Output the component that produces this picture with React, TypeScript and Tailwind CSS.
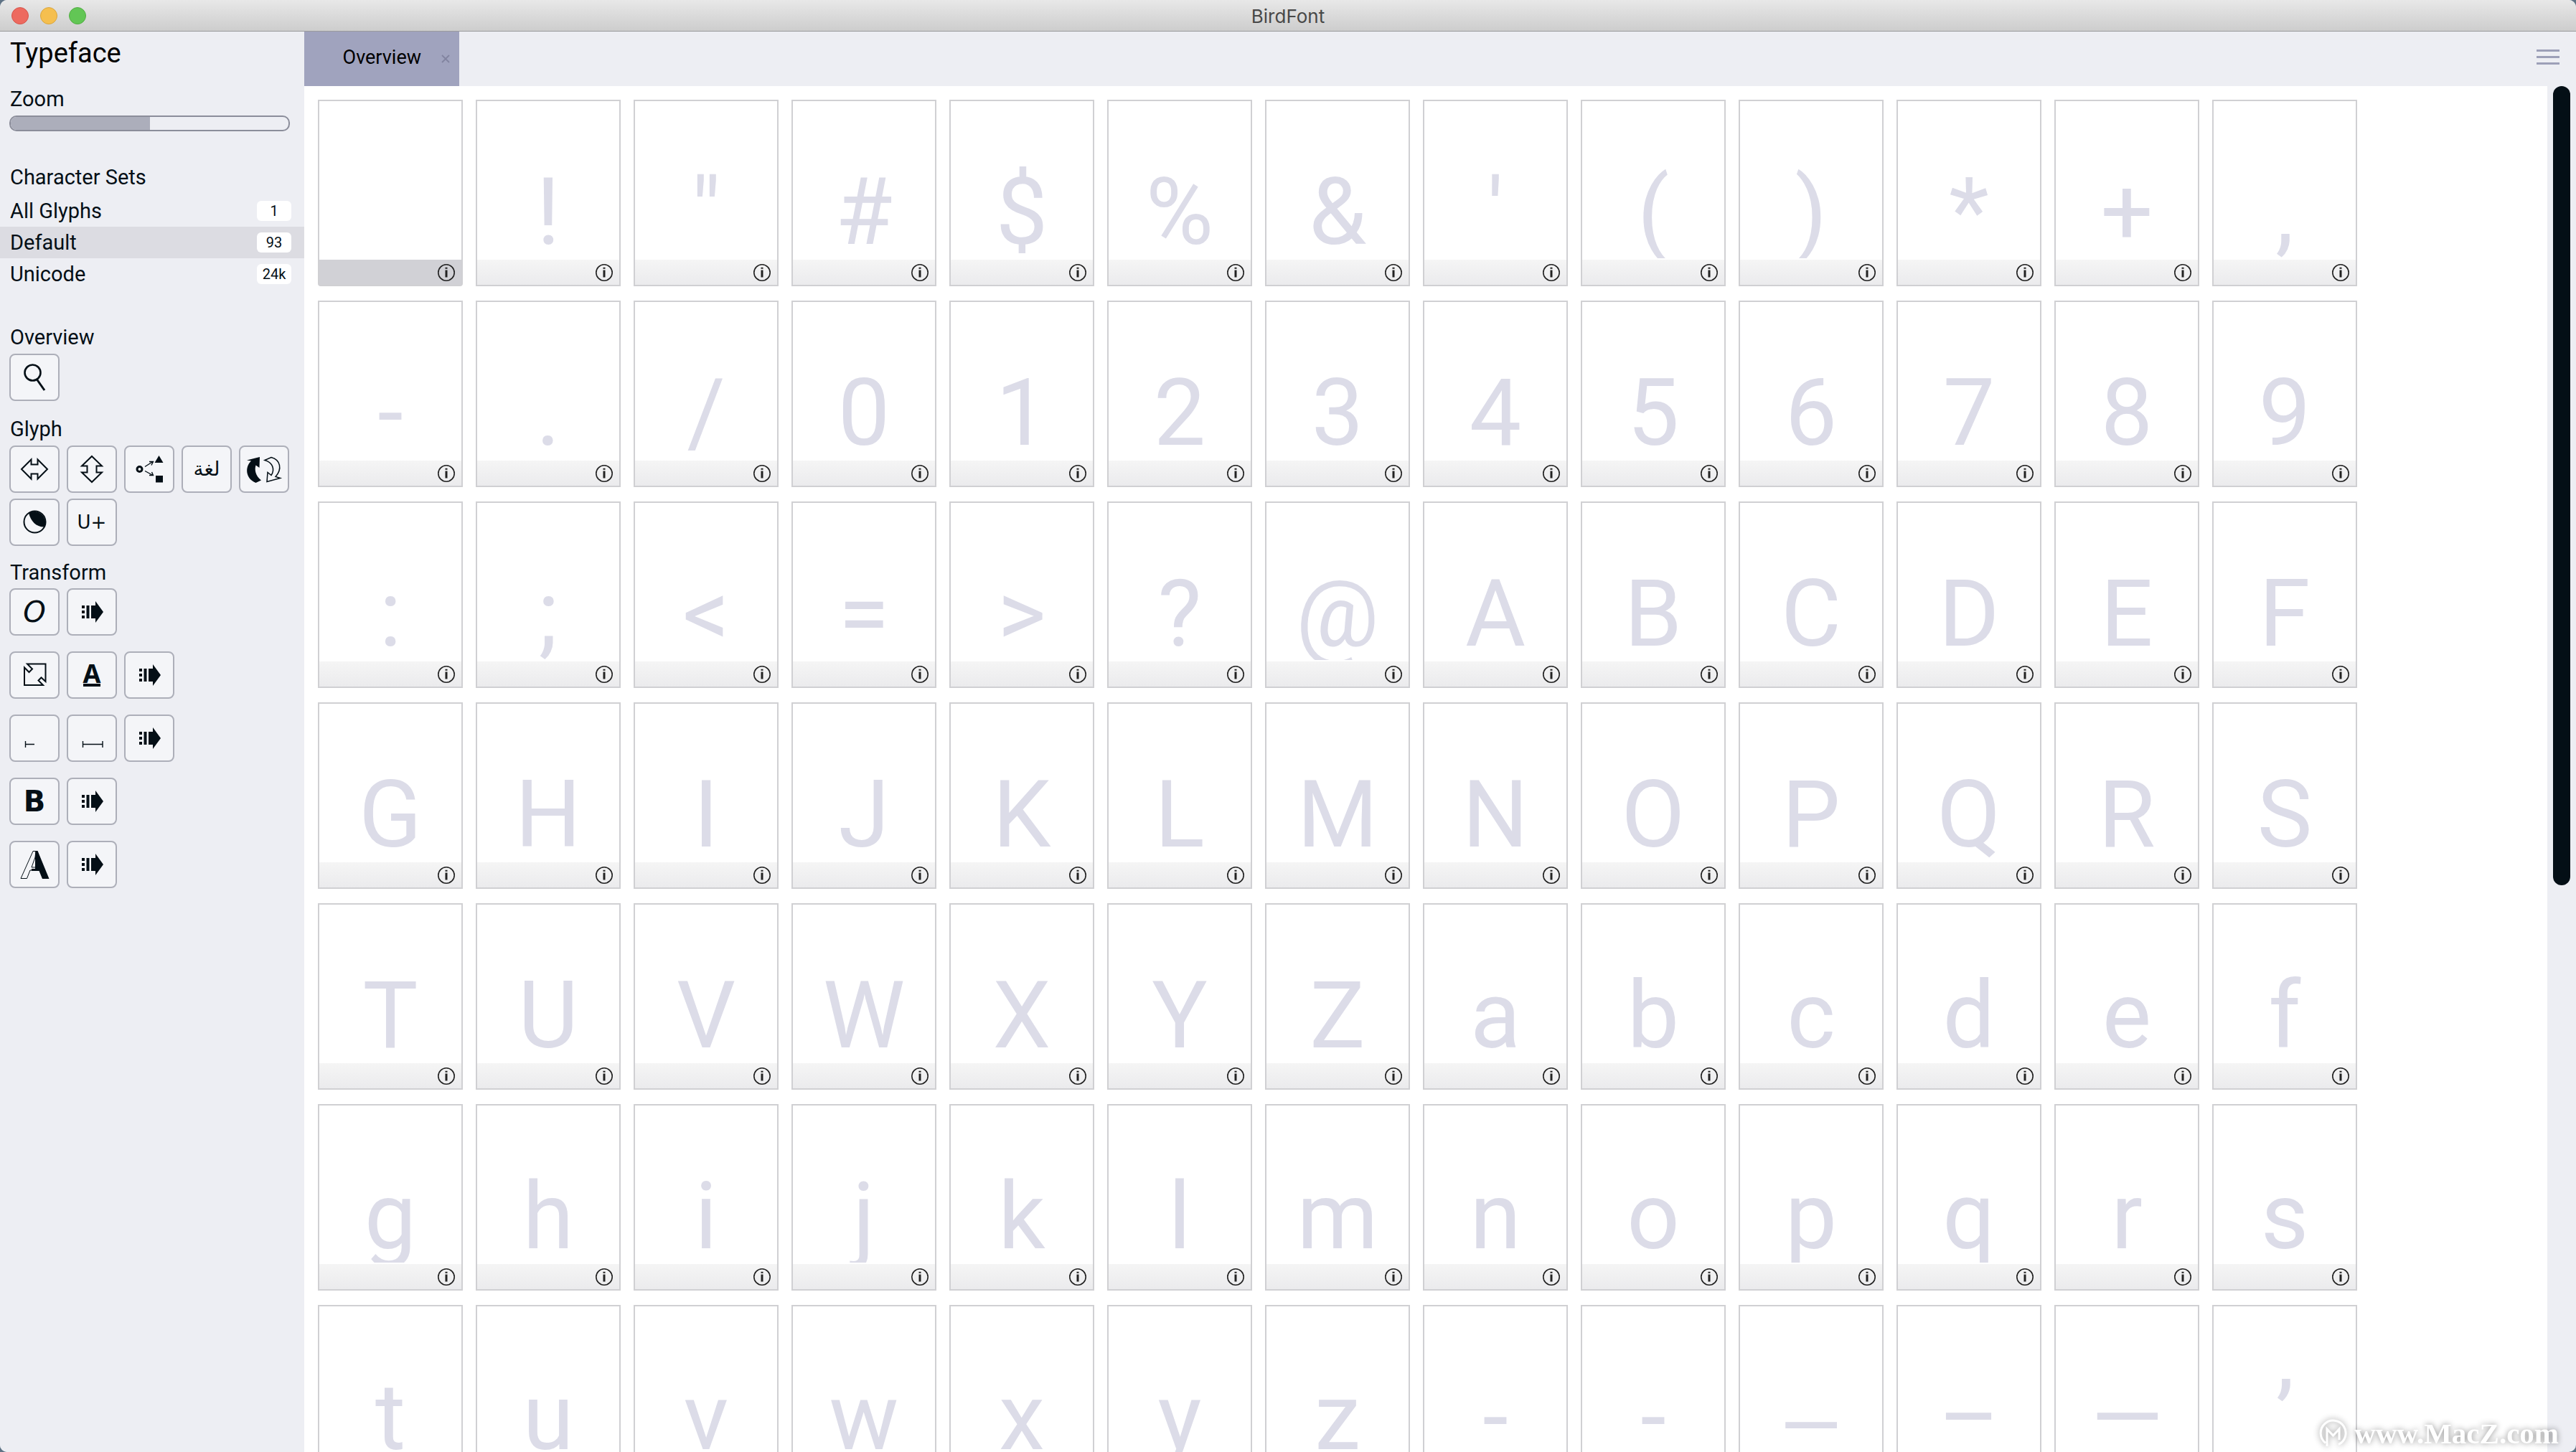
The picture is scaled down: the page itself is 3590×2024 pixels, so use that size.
import { useState } from "react";
import type { ReactNode } from "react";

type CharacterSet = { name: string; count: string };

const characterSets: CharacterSet[] = [
  { name: "All Glyphs", count: "1" },
  { name: "Default", count: "93" },
  { name: "Unicode", count: "24k" },
];

const glyphs = [
  ..." !\"#$%&'()*+,",
  ..."-./0123456789",
  ...":;<=>?@ABCDEF",
  ..."GHIJKLMNOPQRS",
  ..."TUVWXYZabcdef",
  ..."ghijklmnopqrs",
  ..."tuvwxyz",
  "\u2010",
  "\u2011",
  "\u2012",
  "\u2013",
  "\u2014",
  "\u02bc",
];

/* ================= ICONS ================= */

function Icon({ children }: { children: ReactNode }) {
  return (
    <svg
      viewBox="0 0 66 62"
      className="h-[62px] w-[66px]"
      fill="none"
      stroke="#040f16"
      strokeWidth="2"
      aria-hidden="true"
    >
      {children}
    </svg>
  );
}

function SearchIcon() {
  return (
    <Icon>
      <circle cx="30.500" cy="24.500" r="11" strokeWidth="2.6" />
      <path d="M36.500 34 47 49" strokeWidth="3" />
    </Icon>
  );
}

function FlipHorizontalIcon() {
  return (
    <Icon>
      <path d="M15 31 28.500 17.500V24.500H37.500V17.500L51 31 37.500 44.500V37.500H28.500V44.500Z" />
    </Icon>
  );
}

function FlipVerticalIcon() {
  return (
    <Icon>
      <path d="M33 13 47 26.500H39.500V35.500H47L33 49 19 35.500H26.500V26.500H19Z" />
    </Icon>
  );
}

function SubstitutionIcon() {
  return (
    <Icon>
      <circle cx="19.500" cy="31" r="3.500" strokeWidth="3" />
      <path d="M27 27.500 38 20.500M33 20.500H38.500L36 25.500M27 33.500 38 39.500M33 39.500H38.500L36.500 35" strokeWidth="1.400" />
      <path d="M46.500 12 52.500 22H40.500ZM42 40H52V49.500H42Z" fill="#040f16" stroke="none" />
    </Icon>
  );
}

function ReplaceIcon() {
  return (
    <Icon>
      <path
        d="M9 18.500 27 14 26.500 29 21.500 25.500C19.500 32 21 40 29 46.500L21.500 50C7 44 6 28 15 19.500Z"
        fill="#040f16"
        stroke="none"
      />
      <path d="M34 18.500 43 14.500C56 18 58.500 31 49 41.500L55.500 43.500 37 48.500 38 35.500 43 39.500C48.500 31.500 45 21.500 34 18.500Z" strokeWidth="1.500" />
    </Icon>
  );
}

function ContrastIcon() {
  return (
    <Icon>
      <circle cx="33.500" cy="30.500" r="15" />
      <path d="M25 18C28 30 36 38 47 37.500A15.500 15.500 0 0 0 25 18Z" fill="#040f16" stroke="none" />
    </Icon>
  );
}

function ApplyIcon() {
  return (
    <Icon>
      <path
        d="M19 22h4v4h-4zM19 29h4v4h-4zM19 36h4v4h-4zM25.500 22h4v18h-4zM32 22h6v-6l11 15-11 15v-6h-6z"
        fill="#040f16"
        stroke="none"
      />
    </Icon>
  );
}

function ResizeIcon() {
  return (
    <Icon>
      <path d="M23 15.500H48.500V40L42.500 34.500 38.500 38.500 45 45H19V20.500L25.500 27 30 22.500Z" />
    </Icon>
  );
}

function LeftBearingIcon() {
  return (
    <Icon>
      <path d="M20.500 35v9M20.500 39.500H33" strokeWidth="1.400" />
    </Icon>
  );
}

function BearingsIcon() {
  return (
    <Icon>
      <path d="M20.500 35v9M20.500 39.500H48M48 35v9" strokeWidth="1.400" />
    </Icon>
  );
}

function InfoIcon() {
  return (
    <svg viewBox="0 0 24 24" className="size-6" aria-hidden="true">
      <circle cx="12" cy="12" r="11.200" fill="none" stroke="#222" strokeWidth="1.600" />
      <path d="M10.500 4.800h3v2h-3zM10.500 8.500h3v10h-3z" fill="#222" />
    </svg>
  );
}

/* ================= SIDEBAR ================= */

function Tool({ label, children }: { label: string; children: ReactNode }) {
  return (
    <button
      type="button"
      aria-label={label}
      className="flex h-[66px] w-[70px] items-center justify-center rounded-lg border-2 border-[#adafb9] bg-[#f4f5f8] text-[#040f16]"
    >
      {children}
    </button>
  );
}

function Sidebar() {
  const [selected, setSelected] = useState("Default");
  const [zoom, setZoom] = useState(50);

  return (
    <aside className="w-[424px] shrink-0 bg-[#edeef3] pt-2 text-[29px] leading-[36px] text-[#040f16]">
      <h1 className="px-[14px] text-[38px] leading-[44px] text-black">Typeface</h1>

      <label htmlFor="zoom" className="mt-6 block px-[14px]">
        Zoom
      </label>
      <div className="mt-[5px] px-[13px]">
        <div className="relative h-[22px] w-[391px] overflow-hidden rounded-[10px] border-2 border-[#8b8d9a]">
          <div className="h-full bg-[#acaebb]" style={{ width: `${zoom}%` }} />
          <input
            id="zoom"
            type="range"
            value={zoom}
            onChange={(e) => setZoom(Number(e.target.value))}
            className="absolute inset-0 w-full cursor-pointer opacity-0"
          />
        </div>
      </div>

      {/* ================= CHARACTER SETS ================= */}
      <h2 className="mt-[46px] px-[14px] pb-[7px]">Character Sets</h2>
      <ul>
        {characterSets.map((set) => (
          <li key={set.name}>
            <button
              type="button"
              onClick={() => setSelected(set.name)}
              className={`flex h-11 w-full items-center justify-between pr-[18px] pl-[14px] ${
                selected === set.name ? "bg-[#dcdce2]" : ""
              }`}
            >
              <span>{set.name}</span>
              <span className="h-7 w-12 rounded-md bg-white text-center text-[20px] leading-7">
                {set.count}
              </span>
            </button>
          </li>
        ))}
      </ul>

      {/* ================= TOOLS ================= */}
      <h2 className="mt-12 px-[14px]">Overview</h2>
      <div className="mt-[5px] px-[13px]">
        <Tool label="Search">
          <SearchIcon />
        </Tool>
      </div>

      <h2 className="mt-[21px] px-[14px]">Glyph</h2>
      <div className="mt-[5px] flex flex-wrap gap-x-[10px] gap-y-2 pl-[13px]">
        <Tool label="Flip horizontal"><FlipHorizontalIcon /></Tool>
        <Tool label="Flip vertical"><FlipVerticalIcon /></Tool>
        <Tool label="Substitutions"><SubstitutionIcon /></Tool>
        <Tool label="Language">
          <span className="font-['DejaVu_Sans',sans-serif] text-[28px]">لغة</span>
        </Tool>
        <Tool label="Replace"><ReplaceIcon /></Tool>
        <Tool label="Contrast"><ContrastIcon /></Tool>
        <Tool label="Unicode value">
          <span className="font-['DejaVu_Sans',sans-serif] text-[26px] leading-[32px]">U+</span>
        </Tool>
      </div>

      <h2 className="mt-[19px] px-[14px]">Transform</h2>
      <div className="mt-1 flex flex-col gap-[22px] px-[13px]">
        <div className="flex gap-[10px]">
          <Tool label="Slant">
            <span className="font-['DejaVu_Sans',sans-serif] text-[40px] italic">O</span>
          </Tool>
          <Tool label="Apply slant"><ApplyIcon /></Tool>
        </div>
        <div className="flex gap-[10px]">
          <Tool label="Resize"><ResizeIcon /></Tool>
          <Tool label="Baseline">
            <span className="border-b-4 border-[#040f16] font-['Noto_Sans',sans-serif] text-[36px] leading-[28px] font-bold">
              A
            </span>
          </Tool>
          <Tool label="Apply size"><ApplyIcon /></Tool>
        </div>
        <div className="flex gap-[10px]">
          <Tool label="Left bearing"><LeftBearingIcon /></Tool>
          <Tool label="Both bearings"><BearingsIcon /></Tool>
          <Tool label="Apply bearings"><ApplyIcon /></Tool>
        </div>
        <div className="flex gap-[10px]">
          <Tool label="Bold">
            <span className="font-['DejaVu_Sans',sans-serif] text-[40px] font-bold">B</span>
          </Tool>
          <Tool label="Apply bold"><ApplyIcon /></Tool>
        </div>
        <div className="flex gap-[10px]">
          <Tool label="Contrast weight">
            <Icon>
              <path d="M14 50.500 31 12.500H35L34 21 29 35H36V39H27L22.500 50.500Z" strokeWidth="1" />
              <path d="M34.500 12H37.500L53.500 51H44L39.500 40H29V37H34V20Z" fill="#040f16" stroke="none" />
            </Icon>
          </Tool>
          <Tool label="Apply contrast"><ApplyIcon /></Tool>
        </div>
      </div>
    </aside>
  );
}

/* ================= OVERVIEW ================= */

function GlyphCard({ char, active }: { char: string; active: boolean }) {
  return (
    <div
      className={`h-[260px] border-2 border-[#d0d0d3] ${
        active ? "rounded-b-sm bg-[#d1d1d6]" : "bg-white"
      }`}
    >
      <div className="h-[221px] bg-white">
        <div className="h-[219px] overflow-hidden pt-[91px] text-center text-[129px] leading-[128px] whitespace-pre text-[#dcdce8]">
          {char}
        </div>
      </div>
      <div
        className={`flex h-[35px] items-center justify-end pt-px pr-[9px] ${
          active ? "bg-[#d1d1d6]" : "bg-linear-to-b from-[#f5f5f5] to-[#ebebed]"
        }`}
      >
        <button type="button" aria-label={`Info for ${char}`}>
          <InfoIcon />
        </button>
      </div>
    </div>
  );
}

export default function App() {
  return (
    <div className="h-screen bg-[#5f7385] font-[Roboto,sans-serif]">
      <div className="flex h-full flex-col overflow-hidden rounded-[10px] bg-[#edeef3]">
        {/* ================= TITLE BAR ================= */}
        <header className="grid h-11 shrink-0 grid-cols-[1fr_auto_1fr] items-center border-b border-[#9b9b9d] bg-linear-to-b from-[#e8e8e8] to-[#cdcdcd] px-4">
          <div className="flex gap-4">
            <button type="button" aria-label="Close" className="size-6 rounded-full border border-[#d5544b] bg-[#ed6a5f]" />
            <button type="button" aria-label="Minimize" className="size-6 rounded-full border border-[#d9a53d] bg-[#f5bf4f]" />
            <button type="button" aria-label="Maximize" className="size-6 rounded-full border border-[#51ad42] bg-[#62c655]" />
          </div>
          <div className="pt-0.5 font-[Inter,sans-serif] text-[26px] leading-8 text-[#484848]">
            BirdFont
          </div>
        </header>

        <div className="flex min-h-0 flex-1">
          <Sidebar />

          <main className="flex min-w-0 flex-1 flex-col">
            <nav className="flex h-[76px] shrink-0 items-center justify-between pr-[23px]">
              <div className="flex h-full w-[216px] items-center justify-end gap-7 bg-[#a0a3be] pr-[13px]">
                <span className="pb-1 text-[27px] leading-8 text-black">Overview</span>
                <button type="button" aria-label="Close tab">
                  <svg viewBox="0 0 12 12" className="size-3" stroke="#8284a0" strokeWidth="1.800">
                    <path d="M1 1 11 11M11 1 1 11" />
                  </svg>
                </button>
              </div>
              <button type="button" aria-label="Menu" className="flex w-8 flex-col gap-[6px] pb-1.5">
                <span className="h-[3px] bg-[#9da0b8]" />
                <span className="h-[3px] bg-[#9da0b8]" />
                <span className="h-[3px] bg-[#9da0b8]" />
              </button>
            </nav>

            <div className="flex min-h-0 flex-1">
              <section className="min-w-0 flex-1 overflow-hidden bg-white pt-[19px] pl-[19px]">
                <div className="grid grid-cols-[repeat(13,202px)] gap-x-[18px] gap-y-5">
                  {glyphs.map((char, i) => (
                    <GlyphCard key={i} char={char} active={i === 0} />
                  ))}
                </div>
              </section>
              <div className="w-10 shrink-0 pl-2">
                <div className="h-[58.5%] w-6 rounded-full bg-[#040f16]" />
              </div>
            </div>
          </main>
        </div>
      </div>

      {/* ================= WATERMARK ================= */}
      <div className="absolute right-6 bottom-1 flex items-center gap-2.5 text-white drop-shadow-[0_0_4px_rgba(0,0,0,0.45)]">
        <svg viewBox="0 0 40 40" className="size-10" fill="none" stroke="currentColor" strokeWidth="3">
          <path d="M10 33.500A17.500 17.500 0 1 1 28 35.500M12 38V14L20.500 23 29 14V29" />
        </svg>
        <span className="font-['Liberation_Serif',serif] text-[41px] leading-[44px] font-bold">
          www.MacZ.com
        </span>
      </div>
    </div>
  );
}
